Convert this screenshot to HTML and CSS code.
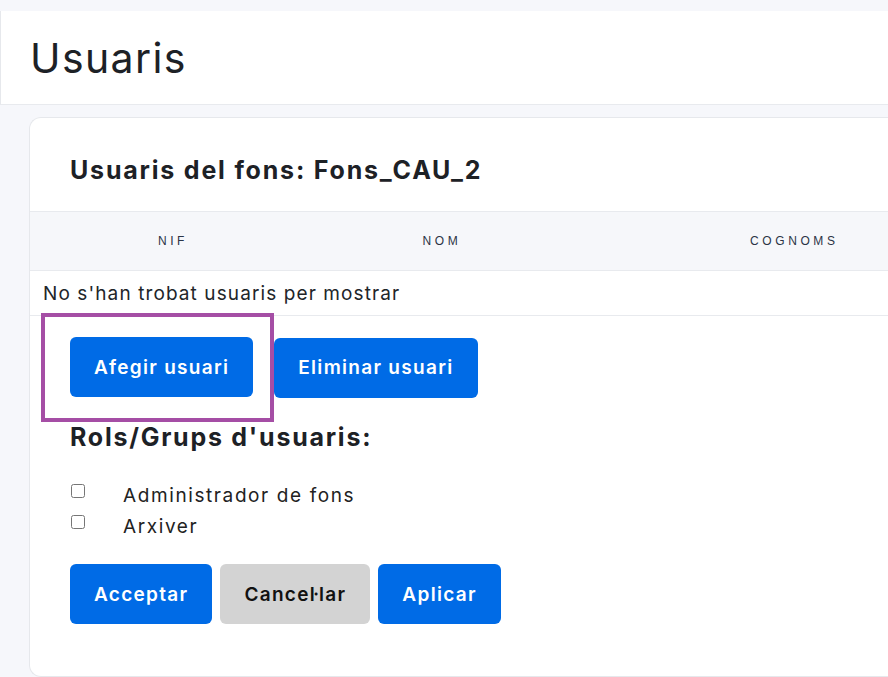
FILE: index.html
```html
<html lang="ca">
<head>
  <meta charset="UTF-8" />
  <meta name="viewport" content="width=device-width, initial-scale=1.0" />
  <title>Usuaris</title>
  <link rel="stylesheet" href="styles.css">
</head>
<body>

  <!-- Capçalera -->
  <div class="page-header">
    <h1>Usuaris</h1>
  </div>

  <!-- Targeta -->
  <div class="content">
    <div class="card">
      <h2 class="card-title">Usuaris del fons: Fons_CAU_2</h2>

      <div class="table">
        <div class="table-head">
          <div class="th">NIF</div>
          <div class="th">NOM</div>
          <div class="th th-last">COGNOMS</div>
        </div>
        <div class="table-empty">No s'han trobat usuaris per mostrar</div>
      </div>

      <div class="user-actions">
        <div class="highlight">
          <button class="btn btn-primary">Afegir usuari</button>
        </div>
        <button class="btn btn-primary">Eliminar usuari</button>
      </div>

      <h2 class="section-title">Rols/Grups d'usuaris:</h2>

      <div class="roles">
        <label class="role"><input type="checkbox" /> <span>Administrador de fons</span></label>
        <label class="role"><input type="checkbox" /> <span>Arxiver</span></label>
      </div>

      <div class="form-actions">
        <button class="btn btn-primary">Acceptar</button>
        <button class="btn btn-grey">Cancel·lar</button>
        <button class="btn btn-primary">Aplicar</button>
      </div>
    </div>
  </div>

</body>
</html>
```

FILE: styles.css
```css
* {
  margin: 0;
  padding: 0;
  box-sizing: border-box;
}

body {
  background-color: #f6f7fb;
  font-family: "Inter", "Open Sans", sans-serif;
  color: #212529;
  height: 100vh;
  overflow: hidden;
  padding-top: 11px;
}

/* Capçalera */
.page-header {
  background: #fff;
  height: 94px;
  border-left: 1px solid #e6e8ec;
  border-bottom: 1px solid #e8eaee;
  padding-left: 29px;
  display: flex;
  align-items: center;
}

.page-header h1 {
  font-size: 41px;
  font-weight: 400;
  letter-spacing: 1.4px;
  color: #1d2126;
}

.content {
  padding: 12px 0 0 29px;
}

/* la targeta continua més enllà de la vora dreta */
.card {
  background: #fff;
  border: 1px solid #e6e8ec;
  border-right: none;
  border-radius: 12px 0 0 12px;
  padding-bottom: 52px;
}

.card-title {
  font-size: 25px;
  font-weight: 700;
  line-height: 30px;
  letter-spacing: 1.8px;
  padding: 37px 0 26px 40px;
  color: #1d2126;
}

/* Taula */
.table-head {
  display: grid;
  grid-template-columns: 286px 252px 1fr;
  background: #f6f7fa;
  border-top: 1px solid #e8eaee;
  border-bottom: 1px solid #e8eaee;
  height: 60px;
  align-items: center;
}

.th {
  text-align: center;
  font-family: "Liberation Sans", Arial, sans-serif;
  font-size: 12px;
  letter-spacing: 3.6px;
  color: #2b3445;
}

.th-last {
  text-align: left;
  padding-left: 182px;
}

.table-empty {
  height: 45px;
  display: flex;
  align-items: center;
  padding-left: 13px;
  font-size: 19px;
  letter-spacing: 1.1px;
  border-bottom: 1px solid #e8eaee;
}

/* Botons */
.user-actions {
  display: flex;
  align-items: center;
  gap: 0;
  margin-top: -3px;
  padding-left: 11px;
}

.highlight {
  border: 4px solid #a54ea5;
  padding: 20px 17px 21px 25px;
}

.btn {
  font-family: "Inter", "Open Sans", sans-serif;
  font-size: 19px;
  font-weight: 600;
  height: 60px;
  padding: 0 24px;
  border: none;
  border-radius: 6px;
  letter-spacing: 1.3px;
}

.btn-primary {
  background: #006be6;
  color: #fff;
}

.btn-grey {
  background: #d3d3d3;
  color: #111;
}

.section-title {
  font-size: 25px;
  font-weight: 700;
  line-height: 32px;
  letter-spacing: 1.75px;
  margin-top: -1px;
  padding-left: 40px;
  color: #1d2126;
}

/* Rols */
.roles {
  margin-top: 27px;
  padding-left: 41px;
}

.role {
  display: flex;
  align-items: center;
  height: 31px;
  font-size: 19px;
  letter-spacing: 1.6px;
  color: #222;
}

.role input {
  width: 14px;
  height: 14px;
  margin: -9px 38px 0 0;
}

.form-actions {
  display: flex;
  gap: 8px;
  margin-top: 22px;
  padding-left: 40px;
}
```
